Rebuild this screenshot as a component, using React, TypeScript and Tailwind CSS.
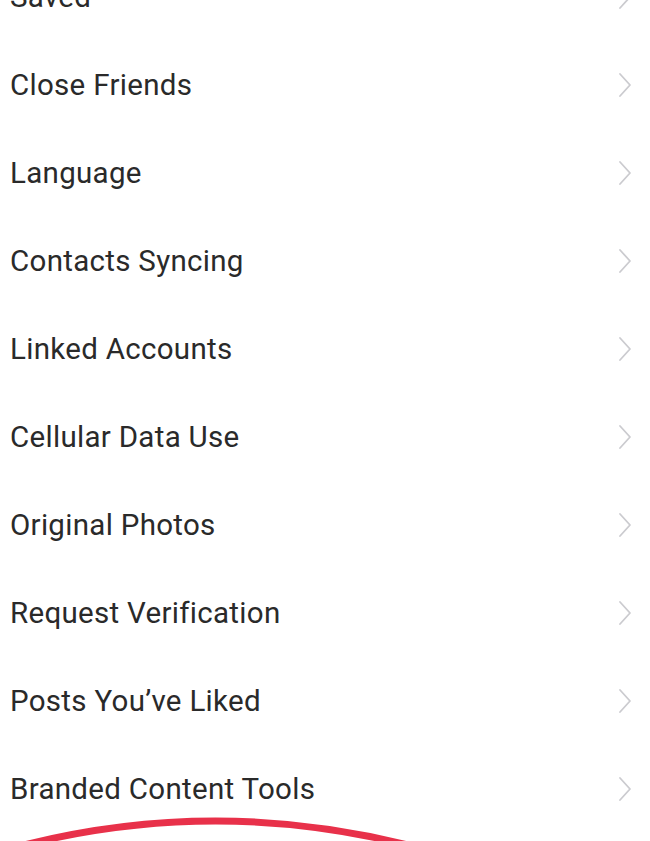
import React from 'react'

const ITEMS = [
  'Saved',
  'Close Friends',
  'Language',
  'Contacts Syncing',
  'Linked Accounts',
  'Cellular Data Use',
  'Original Photos',
  'Request Verification',
  'Posts You’ve Liked',
  'Branded Content Tools',
]

function Chevron() {
  return (
    <svg width="14" height="26" viewBox="0 0 14 26" fill="none" className="shrink-0">
      <path d="M2 2 L12 13 L2 24" stroke="#cbcbcf" strokeWidth="1.8" strokeLinecap="round" strokeLinejoin="round" />
    </svg>
  )
}

export default function App() {
  return (
    <div className="relative w-[650px] h-[841px] overflow-hidden bg-white font-['Roboto',sans-serif]">
      <ul className="-mt-[47px]">
        {ITEMS.map((item) => (
          <li key={item} className="h-[88px] flex items-center justify-between pl-[10px] pr-[18px]">
            <span className="text-[29.5px] text-[#2a2a2a] tracking-[0.3px]">{item}</span>
            <Chevron />
          </li>
        ))}
      </ul>

      {/* red circle annotation */}
      <svg className="absolute left-0 top-[800px]" width="650" height="60" viewBox="0 0 650 60" fill="none">
        <path d="M-2 52 Q 215 -10 434 52" stroke="#e8314a" strokeWidth="7" strokeLinecap="round" />
      </svg>
    </div>
  )
}
